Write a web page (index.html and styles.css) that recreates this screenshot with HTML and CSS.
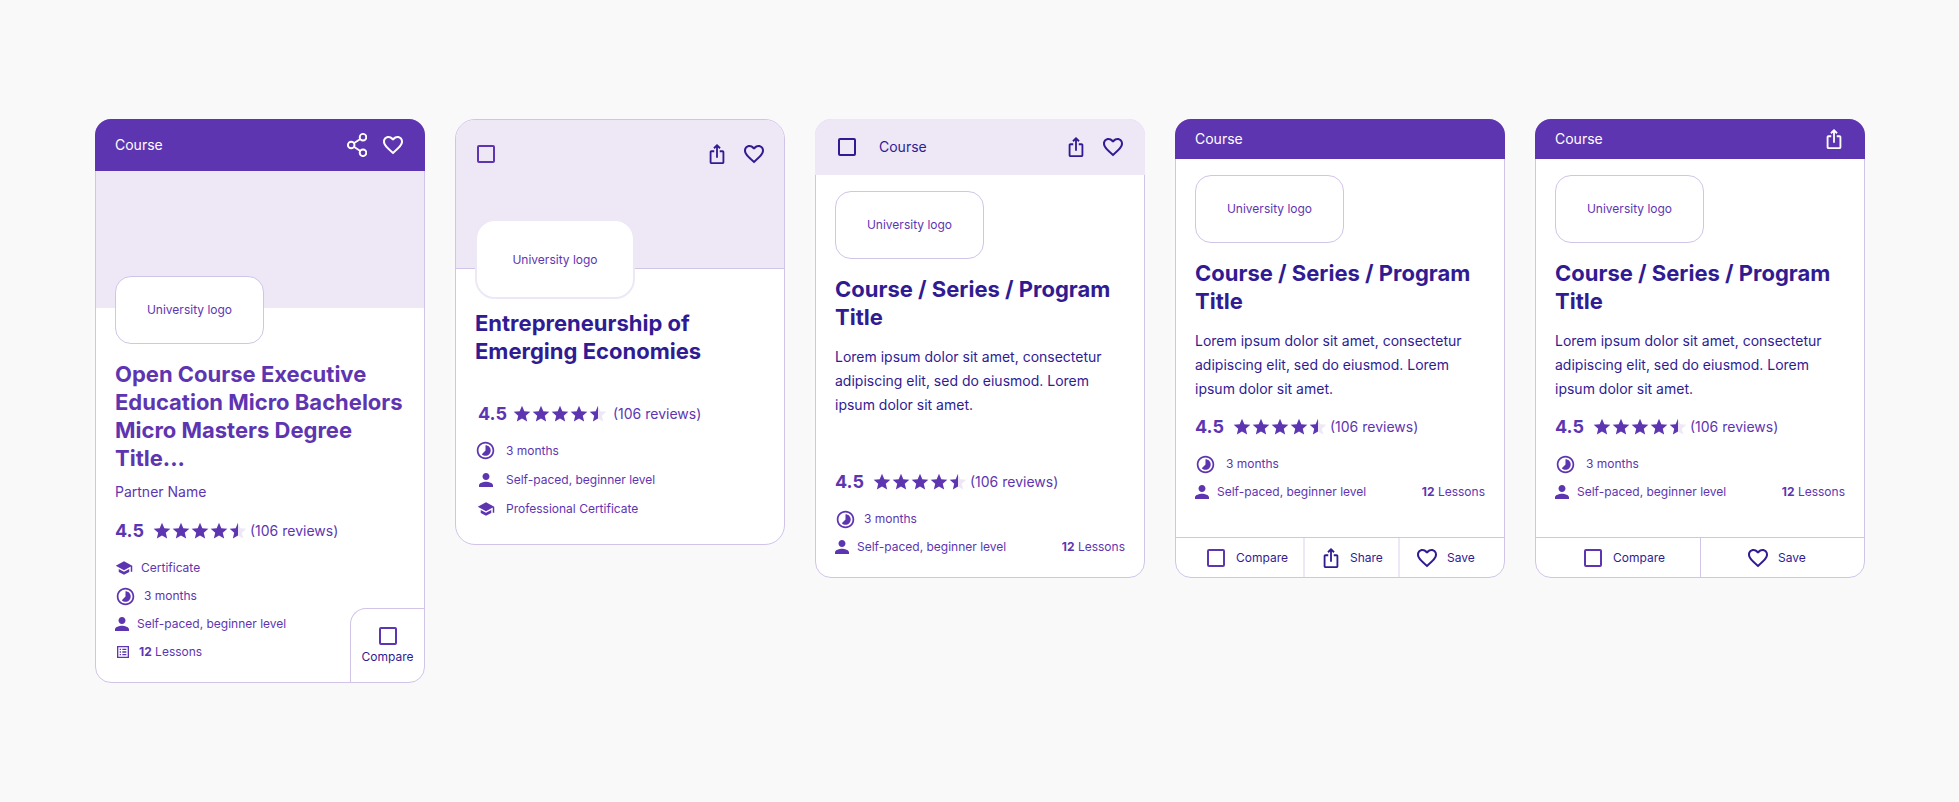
FILE: index.html
```html
<!DOCTYPE html>
<html lang="en">
<head>
    <meta charset="UTF-8">
    <meta name="viewport" content="width=device-width, initial-scale=1.0">
    <title>Course Cards</title>
    <link rel="stylesheet" href="styles.css">
</head>
<body>
    <!-- Icon sprite -->
    <svg class="sprite" aria-hidden="true">
        <defs>
            <linearGradient id="half-fill">
                <stop offset="50%" stop-color="#5e35b1"/>
                <stop offset="50%" stop-color="#ede7f6"/>
            </linearGradient>
            <symbol id="star" viewBox="0 0 24 24">
                <path d="M12 17.27L18.18 21l-1.64-7.03L22 9.24l-7.19-.61L12 2 9.19 8.63 2 9.24l5.46 4.73L5.82 21z"/>
            </symbol>
            <symbol id="stars" viewBox="0 0 96 20">
                <use href="#star" x="0" width="20" height="20"/>
                <use href="#star" x="19" width="20" height="20"/>
                <use href="#star" x="38" width="20" height="20"/>
                <use href="#star" x="57" width="20" height="20"/>
                <use href="#star" x="76" width="20" height="20" fill="url(#half-fill)"/>
            </symbol>
            <symbol id="heart" viewBox="0 0 24 24">
                <path d="M16.5 3c-1.74 0-3.41.81-4.5 2.09C10.91 3.81 9.24 3 7.5 3 4.42 3 2 5.42 2 8.5c0 3.78 3.4 6.86 8.55 11.54L12 21.35l1.45-1.32C18.6 15.36 22 12.28 22 8.5 22 5.42 19.58 3 16.5 3zm-4.4 15.55l-.1.1-.1-.1C7.14 14.24 4 11.39 4 8.5 4 6.5 5.5 5 7.5 5c1.54 0 3.04.99 3.57 2.36h1.87C13.46 5.99 14.96 5 16.5 5c2 0 3.5 1.5 3.5 3.5 0 2.89-3.14 5.74-7.9 10.05z"/>
            </symbol>
            <symbol id="share" viewBox="0 0 24 24">
                <path d="M16 5l-1.42 1.42-1.59-1.59V16h-1.98V4.83L9.42 6.42 8 5l4-4 4 4zm4 5v11c0 1.1-.9 2-2 2H6c-1.11 0-2-.9-2-2V10c0-1.11.89-2 2-2h3v2H6v11h12V10h-3V8h3c1.1 0 2 .89 2 2z"/>
            </symbol>
            <symbol id="share-nodes" viewBox="0 0 22 24">
                <g fill="none" stroke="currentColor" stroke-width="1.9">
                    <circle cx="18" cy="4.2" r="3.3"/>
                    <circle cx="6.2" cy="12" r="3.3"/>
                    <circle cx="18" cy="19.8" r="3.3"/>
                    <path d="M8.9 10.2l6.4-4.2M8.9 13.8l6.4 4.2"/>
                </g>
            </symbol>
            <symbol id="school" viewBox="0 0 24 24">
                <path d="M5 13.18v4L12 21l7-3.82v-4L12 17l-7-3.82zM12 3L1 9l11 6 9-4.91V17h2V9L12 3z"/>
            </symbol>
            <symbol id="time" viewBox="0 0 24 24">
                <path d="M16.24 7.76C15.07 6.59 13.54 6 12 6v6l-4.24 4.24c2.34 2.34 6.14 2.34 8.49 0 2.34-2.34 2.34-6.14-.01-8.48zM12 2C6.48 2 2 6.48 2 12s4.48 10 10 10 10-4.48 10-10S17.52 2 12 2zm0 18c-4.42 0-8-3.58-8-8s3.58-8 8-8 8 3.58 8 8-3.58 8-8 8z"/>
            </symbol>
            <symbol id="person" viewBox="4 4 16 16">
                <path d="M12 12c2.21 0 4-1.79 4-4s-1.79-4-4-4-4 1.79-4 4 1.79 4 4 4zm0 2c-2.67 0-8 1.34-8 4v2h16v-2c0-2.66-5.33-4-8-4z"/>
            </symbol>
            <symbol id="list" viewBox="0 0 24 24">
                <path d="M3 3v18h18V3H3zm16 16H5V5h14v14zM11 7h6v2h-6V7zm0 4h6v2h-6v-2zm0 4h6v2h-6v-2zM7 7h2v2H7V7zm0 4h2v2H7v-2zm0 4h2v2H7v-2z"/>
            </symbol>
        </defs>
    </svg>

    <main class="cards">
        <!-- Card with banner and corner compare -->
        <article class="card card-corner">
            <header class="card-header header-tall">
                <span>Course</span>
                <div class="header-actions">
                    <button type="button" aria-label="Share"><svg class="icon-nodes"><use href="#share-nodes"/></svg></button>
                    <button type="button" aria-label="Save"><svg class="icon-heart"><use href="#heart"/></svg></button>
                </div>
            </header>
            <div class="banner"></div>
            <div class="card-body">
                <div class="logo">University logo</div>
                <h2 class="title">Open Course Executive Education Micro Bachelors Micro Masters Degree Title...</h2>
                <p class="partner">Partner Name</p>
                <div class="rating">
                    <b>4.5</b>
                    <svg class="stars" role="img" aria-label="4.5 out of 5"><use href="#stars"/></svg>
                    <span>(106 reviews)</span>
                </div>
            </div>
            <div class="card-end">
                <ul class="details">
                    <li><svg class="icon-school"><use href="#school"/></svg>Certificate</li>
                    <li><svg class="icon-time"><use href="#time"/></svg>3 months</li>
                    <li><svg class="icon-person"><use href="#person"/></svg>Self-paced, beginner level</li>
                    <li><svg class="icon-list"><use href="#list"/></svg><span><b>12</b> Lessons</span></li>
                </ul>
                <label class="corner-compare"><input type="checkbox">Compare</label>
            </div>
        </article>

        <!-- Card with controls on the banner -->
        <article class="card card-banner">
            <header class="card-header header-banner">
                <input type="checkbox" aria-label="Compare">
                <div class="header-actions">
                    <button type="button" aria-label="Share"><svg class="icon-share"><use href="#share"/></svg></button>
                    <button type="button" aria-label="Save"><svg class="icon-heart"><use href="#heart"/></svg></button>
                </div>
            </header>
            <div class="card-body">
                <div class="logo">University logo</div>
                <h2 class="title">Entrepreneurship of Emerging Economies</h2>
                <div class="rating">
                    <b>4.5</b>
                    <svg class="stars" role="img" aria-label="4.5 out of 5"><use href="#stars"/></svg>
                    <span>(106 reviews)</span>
                </div>
                <ul class="details">
                    <li><span class="icon-cell"><svg class="icon-time"><use href="#time"/></svg></span>3 months</li>
                    <li><span class="icon-cell"><svg class="icon-person"><use href="#person"/></svg></span>Self-paced, beginner level</li>
                    <li><span class="icon-cell"><svg class="icon-school"><use href="#school"/></svg></span>Professional Certificate</li>
                </ul>
            </div>
        </article>

        <!-- Card with light header -->
        <article class="card card-light">
            <header class="card-header header-light">
                <label class="header-compare"><input type="checkbox">Course</label>
                <div class="header-actions">
                    <button type="button" aria-label="Share"><svg class="icon-share"><use href="#share"/></svg></button>
                    <button type="button" aria-label="Save"><svg class="icon-heart"><use href="#heart"/></svg></button>
                </div>
            </header>
            <div class="card-body">
                <div class="logo">University logo</div>
                <h2 class="title">Course / Series / Program Title</h2>
                <p class="description">Lorem ipsum dolor sit amet, consectetur adipiscing elit, sed do eiusmod. Lorem ipsum dolor sit amet.</p>
                <div class="rating">
                    <b>4.5</b>
                    <svg class="stars" role="img" aria-label="4.5 out of 5"><use href="#stars"/></svg>
                    <span>(106 reviews)</span>
                </div>
                <ul class="details">
                    <li><svg class="icon-time"><use href="#time"/></svg>3 months</li>
                    <li><svg class="icon-person"><use href="#person"/></svg>Self-paced, beginner level<span class="lessons"><b>12</b> Lessons</span></li>
                </ul>
            </div>
        </article>

        <!-- Card with three footer actions -->
        <article class="card card-actions">
            <header class="card-header">
                <span>Course</span>
            </header>
            <div class="card-body">
                <div class="logo">University logo</div>
                <h2 class="title">Course / Series / Program Title</h2>
                <p class="description">Lorem ipsum dolor sit amet, consectetur adipiscing elit, sed do eiusmod. Lorem ipsum dolor sit amet.</p>
                <div class="rating">
                    <b>4.5</b>
                    <svg class="stars" role="img" aria-label="4.5 out of 5"><use href="#stars"/></svg>
                    <span>(106 reviews)</span>
                </div>
                <ul class="details">
                    <li><svg class="icon-time"><use href="#time"/></svg>3 months</li>
                    <li><svg class="icon-person"><use href="#person"/></svg>Self-paced, beginner level<span class="lessons"><b>12</b> Lessons</span></li>
                </ul>
            </div>
            <footer class="card-footer footer-three">
                <label><input type="checkbox">Compare</label>
                <button type="button"><svg class="icon-share"><use href="#share"/></svg>Share</button>
                <button type="button"><svg class="icon-heart"><use href="#heart"/></svg>Save</button>
            </footer>
        </article>

        <!-- Card with two footer actions -->
        <article class="card card-actions">
            <header class="card-header">
                <span>Course</span>
                <div class="header-actions">
                    <button type="button" aria-label="Share"><svg class="icon-share"><use href="#share"/></svg></button>
                </div>
            </header>
            <div class="card-body">
                <div class="logo">University logo</div>
                <h2 class="title">Course / Series / Program Title</h2>
                <p class="description">Lorem ipsum dolor sit amet, consectetur adipiscing elit, sed do eiusmod. Lorem ipsum dolor sit amet.</p>
                <div class="rating">
                    <b>4.5</b>
                    <svg class="stars" role="img" aria-label="4.5 out of 5"><use href="#stars"/></svg>
                    <span>(106 reviews)</span>
                </div>
                <ul class="details">
                    <li><svg class="icon-time"><use href="#time"/></svg>3 months</li>
                    <li><svg class="icon-person"><use href="#person"/></svg>Self-paced, beginner level<span class="lessons"><b>12</b> Lessons</span></li>
                </ul>
            </div>
            <footer class="card-footer footer-two">
                <label><input type="checkbox">Compare</label>
                <button type="button"><svg class="icon-heart"><use href="#heart"/></svg>Save</button>
            </footer>
        </article>
    </main>
</body>
</html>
```
FILE: styles.css
```css
* {
    box-sizing: border-box;
}

body {
    margin: 0;
    background: #f9f9f9;
    color: #5e35b1;
    font-family: Inter, sans-serif;
    font-size: 12px;
    line-height: 16px;
}

h2, p, ul {
    margin: 0;
    padding: 0;
}

svg {
    display: block;
    flex-shrink: 0;
    fill: currentColor;
}

.sprite {
    position: absolute;
    width: 0;
    height: 0;
}

button {
    padding: 0;
    border: 0;
    background: none;
    color: inherit;
    font: inherit;
    cursor: pointer;
}

label {
    cursor: pointer;
}

input[type="checkbox"] {
    appearance: none;
    flex-shrink: 0;
    width: 18px;
    height: 18px;
    margin: 0;
    border: 2px solid #5e35b1;
    border-radius: 2px;
    cursor: pointer;
}

input[type="checkbox"]:checked {
    background: #5e35b1;
}

/* Icons */
.icon-heart {
    width: 24px;
    height: 24px;
}

.icon-share {
    width: 22px;
    height: 22px;
}

.icon-nodes {
    width: 22px;
    height: 24px;
}

.icon-school {
    width: 18px;
    height: 18px;
}

.icon-time {
    width: 21px;
    height: 21px;
}

.icon-person {
    width: 14px;
    height: 14px;
}

.icon-list {
    width: 16px;
    height: 16px;
}

/* Cards */
.cards {
    display: grid;
    grid-template-columns: repeat(5, 1fr);
    align-items: start;
    gap: 30px;
    padding: 119px 94px 119px 95px;
}

.card {
    border: 1px solid #d1c4e9;
    border-radius: 16px;
    background: #fff;
}

.card-header {
    display: flex;
    align-items: center;
    justify-content: space-between;
    height: 40px;
    margin: -1px -1px 0;
    padding: 0 20px;
    border-radius: 16px 16px 0 0;
    background: #5e35b1;
    color: #fff;
    font-size: 14px;
}

.header-tall {
    height: 52px;
}

.header-light {
    height: 56px;
    padding-left: 23px;
    background: #ede7f6;
    color: #311b92;
}

.header-banner {
    align-items: flex-start;
    height: 149px;
    margin: 0;
    padding: 22px 18px 0 21px;
    border-bottom: 1px solid #d1c4e9;
    border-radius: 19px 19px 0 0;
    background: #ede7f6;
    color: #311b92;
}

.header-banner input {
    margin: 3px 0;
}

.header-actions {
    display: flex;
    align-items: center;
    gap: 14px;
}

.header-compare {
    display: flex;
    align-items: center;
    gap: 23px;
}

.header-compare input[type="checkbox"] {
    border-color: #311b92;
}

.banner {
    height: 137px;
    background: #ede7f6;
}

.card-body {
    padding: 16px 19px 0;
}

.logo {
    display: flex;
    align-items: center;
    justify-content: center;
    width: 149px;
    height: 68px;
    border: 1px solid #d1c4e9;
    border-radius: 16px;
    background: #fff;
}

.title {
    margin-top: 16px;
    color: #311b92;
    font-size: 22px;
    font-weight: 700;
    line-height: 28px;
}

.partner {
    margin-top: 8px;
    font-size: 14px;
    line-height: 24px;
}

.description {
    margin-top: 14px;
    color: #311b92;
    font-size: 14px;
    line-height: 24px;
}

.rating {
    display: flex;
    align-items: center;
    height: 22px;
    margin-top: 16px;
    font-size: 14px;
}

.rating b {
    font-size: 18px;
}

.stars {
    width: 96px;
    height: 20px;
    margin: 0 2px 0 8px;
}

.details {
    margin-top: 12px;
    list-style: none;
}

.details li {
    display: flex;
    align-items: center;
    gap: 8px;
    height: 28px;
}

.lessons {
    margin-left: auto;
}

/* Corner compare */
.card-corner .title {
    color: #5e35b1;
}

.card-corner .card-body {
    padding-top: 0;
}

.card-corner .logo {
    margin-top: -32px;
    position: relative;
}

.card-end {
    display: flex;
    align-items: flex-end;
    justify-content: space-between;
    padding-left: 19px;
}

.card-end .details {
    padding-bottom: 16px;
}

.corner-compare {
    display: flex;
    flex-direction: column;
    align-items: center;
    gap: 4px;
    width: 74px;
    height: 74px;
    padding-top: 18px;
    border: 1px solid #d1c4e9;
    border-width: 1px 0 0 1px;
    border-radius: 16px 0 0 0;
    color: #311b92;
}

/* Banner card */
.card-banner {
    border-radius: 20px;
}

.card-banner .card-body {
    padding: 0 19px 21px;
}

.card-banner .logo {
    position: relative;
    width: 160px;
    height: 80px;
    margin-top: -50px;
    padding-top: 2px;
    border: 2px solid #ede7f6;
    border-radius: 20px;
}

.card-banner .title {
    margin-top: 10px;
}

.card-banner .rating {
    margin-top: 38px;
    padding-left: 3px;
}

.card-banner .stars {
    margin: 0 5px;
}

.card-banner .details {
    margin-top: 11px;
}

.card-banner .details li {
    gap: 10px;
    height: 29px;
}

.icon-cell {
    display: flex;
    justify-content: center;
    width: 21px;
}

/* Light header card */
.card-light .card-body {
    padding-bottom: 16px;
}

.card-light .rating {
    margin-top: 54px;
}

/* Footer actions */
.card-actions .card-body {
    padding-bottom: 31px;
}

.card-actions .rating {
    margin-top: 15px;
}

.card-actions .icon-time {
    margin-right: 2px;
}

.card-footer {
    display: grid;
    height: 40px;
    border-top: 1px solid #d1c4e9;
    color: #311b92;
}

.footer-three {
    grid-template-columns: 127fr 95fr 106fr;
}

.footer-two {
    grid-template-columns: 1fr 1fr;
}

.card-footer > * {
    display: flex;
    align-items: center;
    gap: 8px;
    padding-left: 15px;
}

.card-footer input {
    margin: 0 3px;
}

.footer-three > * + * {
    border-left: 2px solid #ede7f6;
}

.footer-three > label {
    padding-left: 28px;
}

.footer-two > * {
    padding-left: 45px;
}

.footer-two > * + * {
    border-left: 1px solid #d1c4e9;
}
```
